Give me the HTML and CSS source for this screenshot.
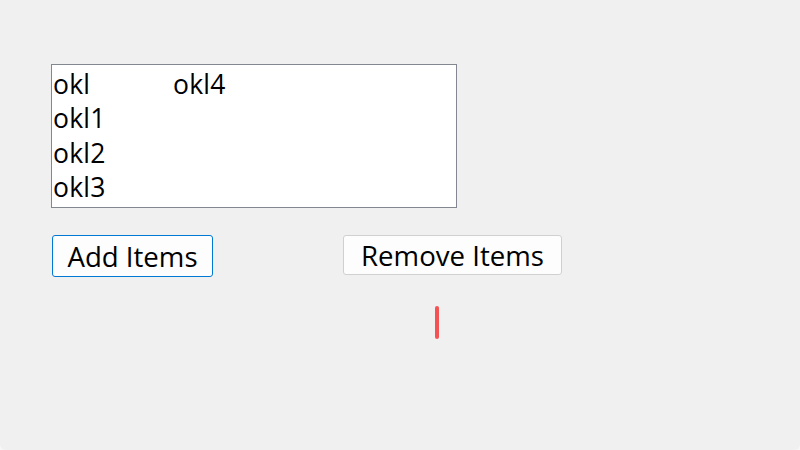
FILE: index.html
```html
<!DOCTYPE html>
<html lang="en">
<head>
<meta charset="utf-8">
<title>Items</title>
<link rel="stylesheet" href="styles.css">
</head>
<body>
<div class="window">
  <div class="listbox">
    <div class="item">okl</div>
    <div class="item">okl1</div>
    <div class="item">okl2</div>
    <div class="item">okl3</div>
    <div class="item">okl4</div>
  </div>
  <div class="buttons">
    <button class="btn btn-add">Add Items</button>
    <button class="btn btn-remove">Remove Items</button>
  </div>
  <div class="marker-row">
    <span class="marker"></span>
  </div>
</div>
</body>
</html>
```
FILE: styles.css
```css
html, body {
  margin: 0;
  padding: 0;
  background: #f7f7f7;
}
.window {
  width: 800px;
  height: 450px;
  box-sizing: border-box;
  background: #f0f0f0;
  border-radius: 0 0 6px 6px;
  padding: 64px 0 0 51px;
  display: flex;
  flex-direction: column;
  font-family: "Open Sans", "Noto Sans", sans-serif;
  color: #000;
}
.listbox {
  box-sizing: border-box;
  width: 406px;
  height: 144px;
  background: #fff;
  border: 1px solid #828790;
  padding: 2px 0 0 1px;
  display: grid;
  grid-template-rows: repeat(4, 34.3px);
  grid-auto-flow: column;
  grid-auto-columns: 120px;
  justify-content: start;
  align-content: start;
}
.item {
  font-size: 26.5px;
  line-height: 34px;
  white-space: nowrap;
  letter-spacing: 0.2px;
}
.buttons {
  display: flex;
  align-items: flex-start;
  margin-top: 27px;
  margin-left: 1px;
  gap: 130px;
}
.btn {
  box-sizing: border-box;
  font-family: "Open Sans", "Noto Sans", sans-serif;
  font-size: 27.6px;
  line-height: 1;
  color: #000;
  background: #fdfdfd;
  padding: 1px 0 0;
  margin: 0;
  display: flex;
  align-items: center;
  justify-content: center;
}
.btn-add {
  width: 161px;
  height: 42px;
  border: 1px solid #0078d4;
  border-radius: 3px;
}
.btn-remove {
  width: 219px;
  height: 40px;
  border: 1px solid #d0d0d0;
  border-radius: 3px;
}
.marker-row {
  display: flex;
  margin-top: 29px;
  padding-left: 384px;
}
.marker {
  width: 4px;
  height: 33px;
  background: #f55353;
  border-radius: 2px;
}
```
